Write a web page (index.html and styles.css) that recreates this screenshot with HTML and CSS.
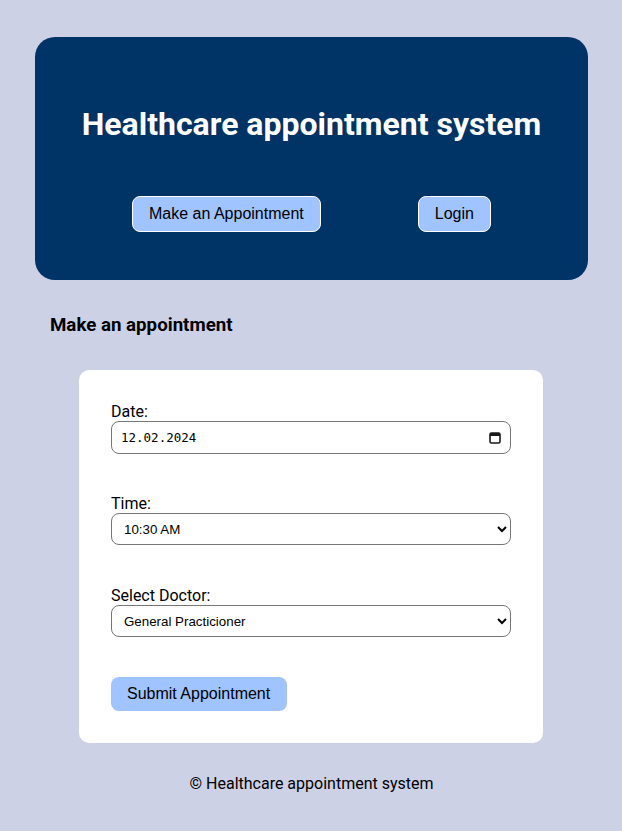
FILE: index.html
```html
<!DOCTYPE html>
<html lang="en">
<head>
<meta charset="utf-8">
<title>Healthcare appointment system</title>
<link rel="stylesheet" href="styles.css">
</head>
<body>
<header class="hero">
  <h1 class="hero-title">Healthcare appointment system</h1>
  <nav class="hero-nav">
    <button class="nav-btn" type="button">Make an Appointment</button>
    <button class="nav-btn" type="button">Login</button>
  </nav>
</header>
<main class="main">
  <h2 class="section-title">Make an appointment</h2>
  <form class="card">
    <div class="field">
      <label class="label" for="date">Date:</label>
      <div class="input date-input" id="date">
        <span class="date-text">12.02.2024</span>
        <svg class="cal" width="12" height="13" viewBox="0 0 12 13"><rect x="1" y="2" width="10" height="10" rx="1.5" fill="none" stroke="#1a1a1a" stroke-width="1.6"/><rect x="1" y="2" width="10" height="3" fill="#1a1a1a"/></svg>
      </div>
    </div>
    <div class="field">
      <label class="label" for="time">Time:</label>
      <select class="input select" id="time">
        <option>10:30 AM</option>
      </select>
    </div>
    <div class="field field-doctor">
      <label class="label" for="doctor">Select Doctor:</label>
      <select class="input select" id="doctor">
        <option>General Practicioner</option>
      </select>
    </div>
    <button class="submit" type="button">Submit Appointment</button>
  </form>
</main>
<footer class="footer">© Healthcare appointment system</footer>
</body>
</html>
```
FILE: styles.css
```css
* { box-sizing: border-box; }
body {
  margin: 0;
  padding: 37px 34px 0 35px;
  background: #cdd1e6;
  font-family: Roboto, "Liberation Sans", sans-serif;
  color: #000;
}
.hero {
  background: #003366;
  border-radius: 20px;
  padding: 67px 0 48px;
}
.hero-title {
  margin: 0;
  color: #fff;
  text-align: center;
  font-size: 32px;
  font-weight: 700;
  line-height: 40px;
}
.hero-nav {
  display: flex;
  justify-content: space-evenly;
  margin-top: 52px;
}
.nav-btn {
  font-family: "Liberation Sans", Arial, sans-serif;
  font-size: 16px;
  line-height: 18px;
  padding: 8px 16px;
  background: #a0c4ff;
  border: 1px solid #fff;
  border-radius: 8px;
  color: #000;
}
.main {
  padding-top: 35px;
}
.section-title {
  margin: 0 0 34px 15px;
  font-size: 18.72px;
  line-height: 21px;
  font-weight: 700;
}
.card {
  width: 464px;
  margin: 0 0 0 44px;
  background: #fff;
  border-radius: 10px;
  padding: 32px;
  display: flex;
  flex-direction: column;
  gap: 40px;
}
.field {
  display: flex;
  flex-direction: column;
}
.field-doctor {
  margin-top: 1px;
}
.label {
  font-size: 16px;
  line-height: 19px;
}
.input {
  width: 400px;
  border: 1px solid #767676;
  border-radius: 8px;
  background: #fff;
  color: #000;
}
.date-input {
  height: 33px;
  display: flex;
  align-items: center;
  justify-content: space-between;
  padding: 0 9px 0 9px;
}
.date-text {
  font-family: "DejaVu Sans Mono", "Liberation Mono", monospace;
  font-size: 12.5px;
}
.select {
  height: 32px;
  font-family: "Liberation Sans", Arial, sans-serif;
  font-size: 13.33px;
  padding: 0 8px;
}
.submit {
  align-self: flex-start;
  font-family: "Liberation Sans", Arial, sans-serif;
  font-size: 16px;
  line-height: 18px;
  padding: 8px 17px 8px 16px;
  background: #a0c4ff;
  border: none;
  border-radius: 8px;
  color: #000;
}
.footer {
  text-align: center;
  font-size: 16px;
  line-height: 19px;
  padding: 31px 0 38px;
}
```
